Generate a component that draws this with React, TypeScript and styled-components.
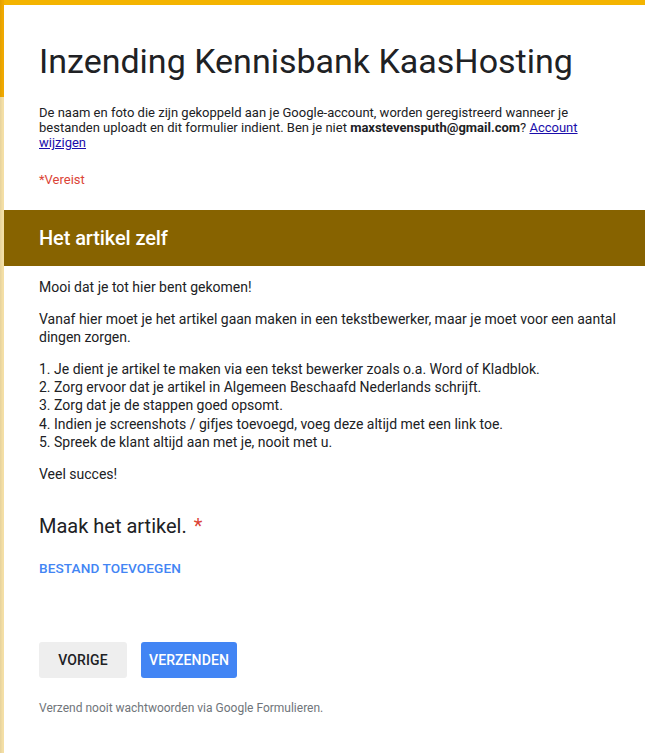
import React from "react";
import styled, { createGlobalStyle } from "styled-components";

const GlobalStyle = createGlobalStyle`
  html, body {
    margin: 0;
    padding: 0;
    background: #ffffff;
  }
  body {
    font-family: Roboto, "Noto Sans", Arial, sans-serif;
    color: #202124;
  }
  * { box-sizing: border-box; }
`;

const Page = styled.div`
  display: flex;
  min-height: 753px;
`;

const Gutter = styled.div`
  width: 4px;
  flex: 0 0 4px;
  background:
    linear-gradient(to right, rgba(0, 0, 0, 0.06), rgba(0, 0, 0, 0) 70%),
    linear-gradient(to bottom, #f0a900 0, #f0a900 97px, #f4dfa6 97px, #f4dfa6 100%);
`;

const Card = styled.main`
  flex: 1;
  background: #ffffff;
  border-top: 5px solid #f4b400;
  display: flex;
  flex-direction: column;
`;

const Header = styled.header`
  padding: 36px 35px 0;
  display: flex;
  flex-direction: column;
`;

const Title = styled.h1`
  margin: 0;
  font-size: 34px;
  line-height: 40px;
  font-weight: 400;
  color: #202124;
`;

const Notice = styled.p`
  margin: 24px 0 0;
  font-size: 13px;
  line-height: 15px;
  color: #202124;
  max-width: 545px;

  b { font-weight: 700; }
  a { color: #1a0dab; text-decoration: underline; }
`;

const Required = styled.div`
  margin: 22px 0 0;
  font-size: 13px;
  line-height: 16px;
  color: #db4437;
`;

const SectionBar = styled.div`
  margin-top: 22px;
  height: 56px;
  background: #876300;
  display: flex;
  align-items: center;
  padding: 0 35px;
`;

const SectionTitle = styled.h2`
  margin: 0;
  font-size: 20px;
  font-weight: 500;
  color: #ffffff;
  letter-spacing: -0.1px;
`;

const Body = styled.section`
  padding: 12px 12px 0 35px;
  display: flex;
  flex-direction: column;
  gap: 13.5px;
`;

const Para = styled.p`
  margin: 0;
  font-size: 14px;
  line-height: 18.3px;
  color: #202124;
`;

const Question = styled.div`
  padding: 31px 35px 0;
  display: flex;
  flex-direction: column;
`;

const QuestionTitle = styled.div`
  font-size: 20px;
  line-height: 24px;
  color: #202124;
`;

const Star = styled.span`
  color: #db4437;
  margin-left: 2px;
`;

const FileButton = styled.div`
  margin-top: 22px;
  font-size: 13.6px;
  line-height: 16px;
  font-weight: 500;
  color: #4285f4;
  text-transform: uppercase;
  letter-spacing: 0.1px;
`;

const Actions = styled.div`
  padding: 66px 35px 0;
  display: flex;
  gap: 14px;
`;

const Button = styled.button<{ $primary?: boolean }>`
  min-width: 88px;
  height: 36px;
  padding: 0 8px;
  border: none;
  border-radius: 3px;
  font-family: Roboto, "Noto Sans", Arial, sans-serif;
  font-size: 14px;
  font-weight: 500;
  letter-spacing: 0.1px;
  text-transform: uppercase;
  background: ${(p) => (p.$primary ? "#4285f4" : "#eeeeee")};
  color: ${(p) => (p.$primary ? "#ffffff" : "#202124")};
  cursor: pointer;
`;

const Footer = styled.div`
  padding: 22px 35px 0;
  font-size: 12px;
  line-height: 16px;
  color: #70757a;
`;

export default function App() {
  return (
    <>
      <GlobalStyle />
      <Page>
        <Gutter />
        <Card>
          <Header>
            <Title>Inzending Kennisbank KaasHosting</Title>
            <Notice>
              De naam en foto die zijn gekoppeld aan je Google-account, worden geregistreerd wanneer je
              bestanden uploadt en dit formulier indient. Ben je niet <b>maxstevensputh@gmail.com</b>?{" "}
              <a href="#">Account wijzigen</a>
            </Notice>
            <Required>*Vereist</Required>
          </Header>
          <SectionBar>
            <SectionTitle>Het artikel zelf</SectionTitle>
          </SectionBar>
          <Body>
            <Para>Mooi dat je tot hier bent gekomen!</Para>
            <Para>
              Vanaf hier moet je het artikel gaan maken in een tekstbewerker, maar je moet voor een aantal
              dingen zorgen.
            </Para>
            <Para>
              1. Je dient je artikel te maken via een tekst bewerker zoals o.a. Word of Kladblok.
              <br />
              2. Zorg ervoor dat je artikel in Algemeen Beschaafd Nederlands schrijft.
              <br />
              3. Zorg dat je de stappen goed opsomt.
              <br />
              4. Indien je screenshots / gifjes toevoegd, voeg deze altijd met een link toe.
              <br />
              5. Spreek de klant altijd aan met je, nooit met u.
            </Para>
            <Para>Veel succes!</Para>
          </Body>
          <Question>
            <QuestionTitle>
              Maak het artikel.<Star> *</Star>
            </QuestionTitle>
            <FileButton>Bestand toevoegen</FileButton>
          </Question>
          <Actions>
            <Button>Vorige</Button>
            <Button $primary>Verzenden</Button>
          </Actions>
          <Footer>Verzend nooit wachtwoorden via Google Formulieren.</Footer>
        </Card>
      </Page>
    </>
  );
}
